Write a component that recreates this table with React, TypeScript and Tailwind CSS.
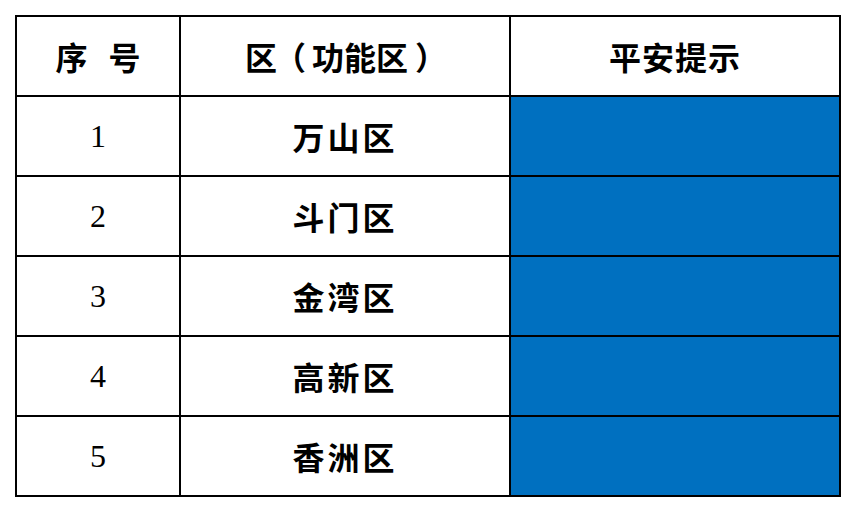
const rows = [
  { no: "1", name: "万山区" },
  { no: "2", name: "斗门区" },
  { no: "3", name: "金湾区" },
  { no: "4", name: "高新区" },
  { no: "5", name: "香洲区" },
]

const cjk = "font-['Noto_Sans_CJK_SC',sans-serif] font-bold text-[32px] text-black"
const cell = "h-[80px] border-r-2 border-b-2 border-black flex items-center justify-center box-border"
const box = "inline-flex w-[32px] justify-center"

export default function App() {
  return (
    <div className="w-[856px] h-[512px] bg-white pt-[15px] pl-[15px]">
      <div className="w-[826px] grid grid-cols-[164px_330px_330px] border-l-2 border-t-2 border-black box-border">
        {/* 表头 */}
        <div className={`${cell} ${cjk}`}>
          <span>序</span>
          <span className="ml-[21px]">号</span>
        </div>
        <div className={`${cell} ${cjk} !justify-start pl-[64px]`}>
          <span className={box}>区</span>
          <span className={`${box} ml-[-3px] mr-[6px]`}>（</span>
          <span className={box}>功</span>
          <span className={box}>能</span>
          <span className={box}>区</span>
          <span className={`${box} ml-[7px]`}>）</span>
        </div>
        <div className={`${cell} ${cjk} tracking-[1px]`}>平安提示</div>

        {rows.map((r) => (
          <div key={r.no} className="contents">
            <div className={`${cell} font-['Liberation_Serif',serif] text-[32px] text-black`}>{r.no}</div>
            <div className={`${cell} ${cjk} tracking-[3px]`}>{r.name}</div>
            <div className={`${cell} bg-[#0070C0]`} />
          </div>
        ))}
      </div>
    </div>
  )
}
